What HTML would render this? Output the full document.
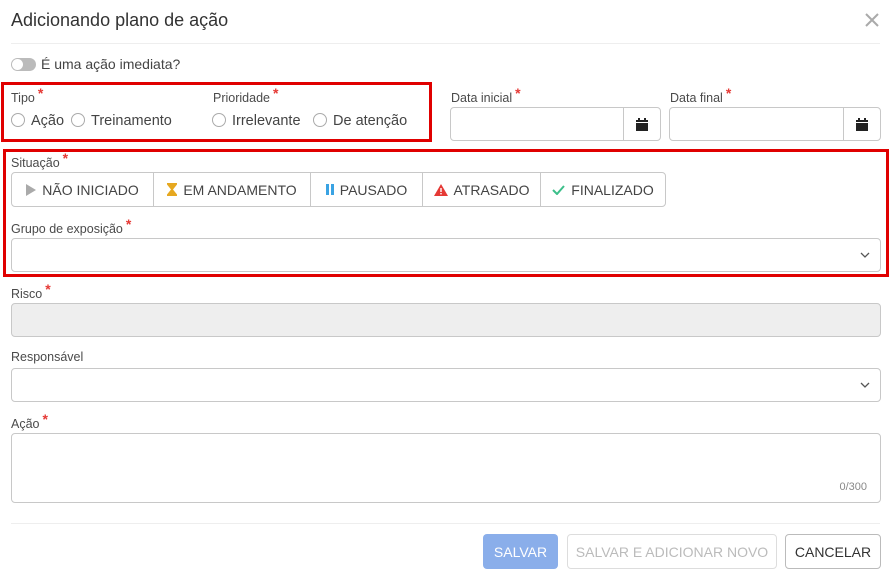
<!DOCTYPE html>
<html><head><meta charset="utf-8">
<style>
*{box-sizing:border-box;margin:0;padding:0}
body{width:890px;height:574px;background:#fff;font-family:"Liberation Sans",sans-serif;color:#333;position:relative;overflow:hidden}
.a{position:absolute}
.lbl{font-size:12.5px;color:#4a4a4a;white-space:nowrap}
.lbl b{color:#e53935;font-weight:bold;font-size:14px;position:relative;top:-4px;margin-left:3px}
.inp{position:absolute;border:1px solid #c8c8c8;border-radius:4px;background:#fff}
.radio{display:inline-block;width:14px;height:14px;border:1px solid #aaa;border-radius:50%;vertical-align:-2px;margin-right:6px}
.rt{font-size:14.5px;color:#444;white-space:nowrap}
.red{position:absolute;border:3px solid #e00000}
.grp{position:absolute;left:11px;top:172px;width:655px;height:35px;border:1px solid #c8c8c8;border-radius:4px;display:flex}
.grp div{border-right:1px solid #c8c8c8;display:flex;align-items:center;justify-content:center;font-size:14px;color:#444;gap:6px}
.grp div:last-child{border-right:none}
.chev{position:absolute;right:10px;top:13px}
.btn{position:absolute;top:534px;height:35px;border-radius:4px;font-size:14px;display:flex;align-items:center;justify-content:center}
</style></head><body>
<div class="a" style="left:11px;top:10px;font-size:18px;color:#333">Adicionando plano de ação</div>
<svg class="a" style="left:865px;top:13px" width="14" height="14" viewBox="0 0 14 14"><path d="M1 1L13 13M13 1L1 13" stroke="#aaa" stroke-width="2"/></svg>
<div class="a" style="left:11px;top:43px;width:869px;height:1px;background:#eee"></div>

<div class="a" style="left:11px;top:58px;width:25px;height:13px;border-radius:7px;background:#bbb"></div>
<div class="a" style="left:12px;top:59px;width:11px;height:11px;border-radius:50%;background:#fff"></div>
<div class="a" style="left:41px;top:56px;font-size:14px;color:#444">É uma ação imediata?</div>

<div class="red" style="left:1px;top:82px;width:431px;height:60px"></div>
<div class="a lbl" style="left:11px;top:89px">Tipo<b>*</b></div>
<div class="a rt" style="left:11px;top:113px"><span class="radio"></span>Ação</div>
<div class="a rt" style="left:71px;top:113px"><span class="radio"></span>Treinamento</div>
<div class="a lbl" style="left:213px;top:89px">Prioridade<b>*</b></div>
<div class="a rt" style="left:212px;top:113px"><span class="radio"></span>Irrelevante</div>
<div class="a rt" style="left:313px;top:113px"><span class="radio"></span>De atenção</div>

<div class="a lbl" style="left:451px;top:89px">Data inicial<b>*</b></div>
<div class="inp" style="left:450px;top:107px;width:211px;height:34px"><div class="a" style="left:172px;top:0;width:1px;height:32px;background:#c8c8c8"></div>
<svg class="a" style="left:185px;top:9px" width="12" height="14" viewBox="0 0 12 14"><rect x="0" y="3" width="12" height="11" fill="#222"/><rect x="2" y="1" width="2" height="3" fill="#222"/><rect x="8" y="1" width="2" height="3" fill="#222"/><rect x="0" y="5" width="12" height="1" fill="#fff"/></svg></div>
<div class="a lbl" style="left:670px;top:89px">Data final<b>*</b></div>
<div class="inp" style="left:669px;top:107px;width:212px;height:34px"><div class="a" style="left:173px;top:0;width:1px;height:32px;background:#c8c8c8"></div>
<svg class="a" style="left:186px;top:9px" width="12" height="14" viewBox="0 0 12 14"><rect x="0" y="3" width="12" height="11" fill="#222"/><rect x="2" y="1" width="2" height="3" fill="#222"/><rect x="8" y="1" width="2" height="3" fill="#222"/><rect x="0" y="5" width="12" height="1" fill="#fff"/></svg></div>

<div class="red" style="left:3px;top:149px;width:886px;height:128px"></div>
<div class="a lbl" style="left:11px;top:154px">Situação<b>*</b></div>
<div class="grp">
<div style="width:142px"><svg width="10" height="12"><path d="M0 0L10 6L0 12Z" fill="#aaa"/></svg>NÃO INICIADO</div>
<div style="width:157px"><svg width="10" height="13"><path d="M0 0H10V1.5L6 6.5L10 11.5V13H0V11.5L4 6.5L0 1.5Z" fill="#e6a820"/></svg>EM ANDAMENTO</div>
<div style="width:112px"><svg width="8" height="11"><rect x="0" width="3" height="11" fill="#3aa3e3"/><rect x="5" width="3" height="11" fill="#3aa3e3"/></svg>PAUSADO</div>
<div style="width:118px"><svg width="14" height="12"><path d="M7 0L14 12H0Z" fill="#e53935"/><rect x="6.3" y="4" width="1.4" height="4" fill="#fff"/><rect x="6.3" y="9" width="1.4" height="1.4" fill="#fff"/></svg>ATRASADO</div>
<div style="width:124px"><svg width="13" height="10"><path d="M1 5L5 9L12 1" stroke="#3cbf8a" stroke-width="2" fill="none"/></svg>FINALIZADO</div>
</div>
<div class="a lbl" style="left:11px;top:220px">Grupo de exposição<b>*</b></div>
<div class="inp" style="left:11px;top:238px;width:870px;height:34px"><svg class="chev" width="10" height="6"><path d="M1 1L5 5L9 1" stroke="#555" stroke-width="1.3" fill="none"/></svg></div>

<div class="a lbl" style="left:11px;top:285px">Risco<b>*</b></div>
<div class="inp" style="left:11px;top:303px;width:870px;height:34px;background:#eee"></div>
<div class="a lbl" style="left:11px;top:350px">Responsável</div>
<div class="inp" style="left:11px;top:368px;width:870px;height:34px"><svg class="chev" width="10" height="6"><path d="M1 1L5 5L9 1" stroke="#555" stroke-width="1.3" fill="none"/></svg></div>
<div class="a lbl" style="left:11px;top:415px">Ação<b>*</b></div>
<div class="inp" style="left:11px;top:433px;width:870px;height:70px"><div class="a" style="right:13px;top:47px;font-size:11px;color:#888">0/300</div></div>

<div class="a" style="left:11px;top:523px;width:869px;height:1px;background:#eee"></div>
<div class="btn" style="left:483px;width:75px;background:#8aaeea;color:#fff">SALVAR</div>
<div class="btn" style="left:567px;width:210px;border:1px solid #ddd;color:#bbb">SALVAR E ADICIONAR NOVO</div>
<div class="btn" style="left:785px;width:96px;border:1px solid #bbb;color:#333">CANCELAR</div>
</body></html>
